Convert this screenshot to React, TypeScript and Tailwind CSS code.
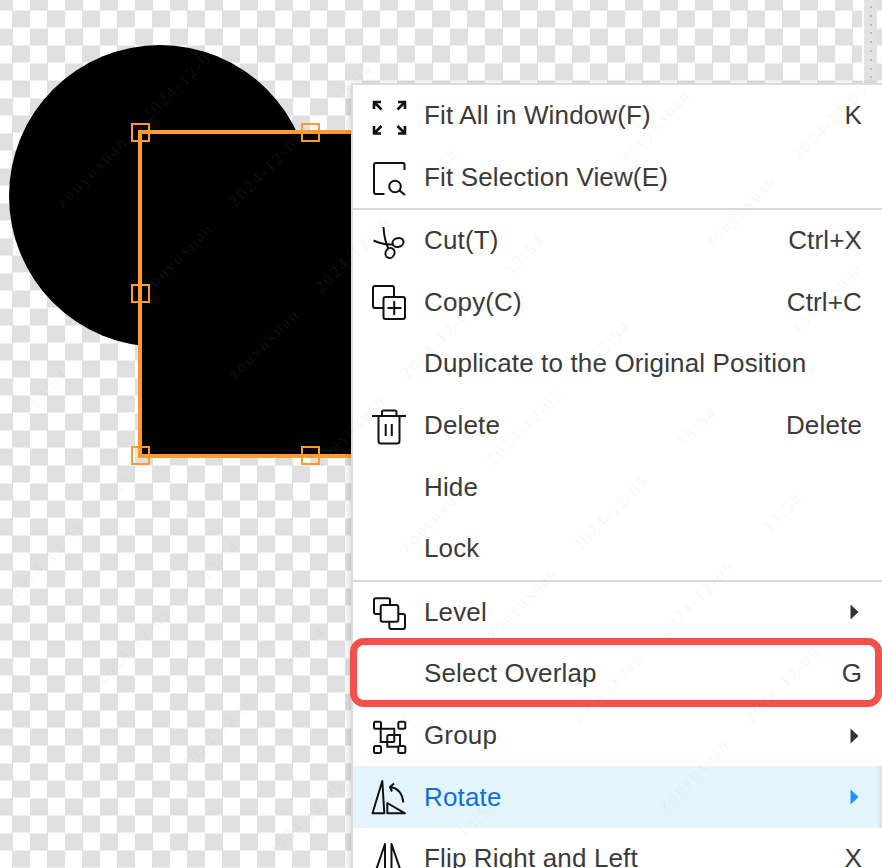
import React from 'react';

const Icon = ({ children }: { children: React.ReactNode }) => (
  <svg width="36" height="36" viewBox="0 0 36 36" fill="none" stroke="#111" strokeWidth="2" className="shrink-0 overflow-visible">
    {children}
  </svg>
);

const icons: Record<string, React.ReactNode> = {
  fit: (
    <>
      <path d="M3.5 4.5 L10.5 11.5 M3 11 V4 H10" strokeWidth="2.6" />
      <path d="M33.5 4.5 L26.5 11.5 M27 4 H34 V11" strokeWidth="2.6" />
      <path d="M3.5 35 L10.5 28 M3 28 V35.5 H10" strokeWidth="2.6" />
      <path d="M33.5 35 L26.5 28 M27 35.5 H34 V28" strokeWidth="2.6" />
    </>
  ),
  selection: (
    <>
      <path d="M33.5 11 V5.5 Q33.5 4 32 4 H5 Q3 4 3 6 V33 Q3 35 5 35 H13.5" />
      <circle cx="24" cy="27.5" r="5.8" />
      <path d="M28.5 31.5 L34 36" strokeWidth="2.2" />
    </>
  ),
  cut: (
    <>
      <path d="M2.5 17.5 Q12 22 22.5 21.5" />
      <path d="M12.5 4 Q13 16 17.5 26" />
      <ellipse cx="27" cy="19.5" rx="5.6" ry="4.4" transform="rotate(-15 27 19.5)" />
      <ellipse cx="19" cy="30" rx="4.4" ry="5.2" transform="rotate(25 19 30)" />
    </>
  ),
  copy: (
    <>
      <path d="M12 24 H4 Q2 24 2 22 V4 Q2 2 4 2 H21 Q23 2 23 4 V12.5" />
      <rect x="12.5" y="13" width="21.5" height="22" rx="2" />
      <path d="M23.2 17 V31 M16.5 24 H30.5" />
    </>
  ),
  trash: (
    <>
      <path d="M1 8 H35" />
      <path d="M11 8 V4 Q11 2.5 12.5 2.5 H24 Q25.5 2.5 25.5 4 V8" />
      <path d="M7.5 8 V33 Q7.5 35.5 10 35.5 H26 Q28.5 35.5 28.5 33 V8" />
      <path d="M14.7 16 V28 M20.8 16 V28" />
    </>
  ),
  level: (
    <>
      <path d="M9.7 20 H5 Q3 20 3 18 V6 Q3 4.3 5 4.3 H17 Q19 4.3 19 6 V11" />
      <rect x="9.7" y="11" width="17.6" height="16.7" rx="2" />
      <path d="M27.3 20 H32 Q34 20 34 22 V33 Q34 35 32 35 H20.3 Q18.3 35 18.3 33 V27.7" />
    </>
  ),
  group: (
    <>
      <rect x="3" y="3.7" width="7" height="7" rx="1.5" />
      <rect x="27.3" y="3.7" width="7" height="7" rx="1.5" />
      <rect x="3" y="28" width="7" height="7" rx="1.5" />
      <rect x="27.3" y="28" width="7" height="7" rx="1.5" />
      <path d="M10 10.7 H23.3 V17 M16.3 24 H9.7 V10.7" />
      <rect x="16.3" y="17" width="7" height="7" rx="1.5" />
      <path d="M23.3 17 H29 V28 M16.3 24 V28.7 H27.3" />
    </>
  ),
  rotate: (
    <>
      <path d="M11.3 2 L1.5 34.3 H13.3 Z" strokeLinejoin="round" />
      <path d="M16.3 24 V34.3 H34 Z" strokeLinejoin="round" />
      <path d="M19.5 8 Q31 10 32.3 23.5" />
      <path d="M23 4.5 L19 8 L21 12.5" />
    </>
  ),
  flip: (
    <>
      <path d="M14 3 L2 38 H14 Z" strokeLinejoin="round" />
      <path d="M20.5 3 L32.5 38 H20.5 Z" strokeLinejoin="round" />
    </>
  ),
};

type Item = { label: string; icon?: string; key?: string; arrow?: boolean; active?: boolean; divider?: boolean };

const items: Item[] = [
  { label: 'Fit All in Window(F)', icon: 'fit', key: 'K' },
  { label: 'Fit Selection View(E)', icon: 'selection', divider: true },
  { label: 'Cut(T)', icon: 'cut', key: 'Ctrl+X' },
  { label: 'Copy(C)', icon: 'copy', key: 'Ctrl+C' },
  { label: 'Duplicate to the Original Position' },
  { label: 'Delete', icon: 'trash', key: 'Delete' },
  { label: 'Hide' },
  { label: 'Lock', divider: true },
  { label: 'Level', icon: 'level', arrow: true },
  { label: 'Select Overlap', key: 'G' },
  { label: 'Group', icon: 'group', arrow: true },
  { label: 'Rotate', icon: 'rotate', arrow: true, active: true },
  { label: 'Flip Right and Left', icon: 'flip', key: 'X' },
];

const MenuRow = ({ item }: { item: Item }) => (
  <>
    <div className={`relative flex h-[61.6px] shrink-0 items-center pl-[18px] pr-[20px] ${item.active ? 'bg-[#e3f4fd] text-[#0f6fdc]' : 'text-[#3a3a3a]'}`}>
      <div className="h-9 w-9 shrink-0">{item.icon && <Icon>{icons[item.icon]}</Icon>}</div>
      <span className="ml-[17px] whitespace-nowrap">{item.label}</span>
      {item.key && <span className="ml-auto whitespace-nowrap">{item.key}</span>}
      {item.arrow && (
        <svg width="9" height="16" viewBox="0 0 9 16" className="ml-auto mr-[3px]">
          <path d="M0.5 0.5 L8.5 8 L0.5 15.5 Z" fill={item.active ? '#1e90ff' : '#333'} />
        </svg>
      )}
      {item.active && <div className="absolute inset-y-0 right-0 w-1.5 bg-gradient-to-r from-transparent to-[#d5e2ea]" />}
    </div>
    {item.divider && <div className="h-[2px] shrink-0 bg-[#d9d9d9]" />}
  </>
);

// watermark runs along diagonals: the three words repeat across, the same word repeats down
const words = [
  { text: 'zouyuxuan', s: -80 },
  { text: '2024-12-05', s: 98 },
  { text: '13:54', s: 270 },
];
const marks: { text: string; x: number; y: number }[] = [];
for (let p = -2; p <= 2; p++) {
  for (const w of words) {
    for (let k = -1; k <= 8; k++) {
      const s = w.s + p * 610;
      const t = 264 + 172 * k;
      const x = (s + t) / 2;
      const y = (t - s) / 2;
      if (x > 45 && x < 835 && y > 45 && y < 820) marks.push({ text: w.text, x, y });
    }
  }
}

const handles = ['left-[131px] top-[123px]', 'left-[301px] top-[123px]', 'left-[131px] top-[284px]', 'left-[131px] top-[446px]', 'left-[301px] top-[446px]'];

export default function App() {
  return (
    <div className="relative h-[868px] w-[882px] overflow-hidden bg-white bg-[conic-gradient(#e0e0e0_25%,#fff_0_50%,#e0e0e0_0_75%,#fff_0)] bg-[length:35px_35px] bg-[position:-5px_10.5px] font-['Liberation_Sans',Arial,sans-serif] text-[26px] tracking-[0.15px]">
      {/* canvas shapes */}
      <div className="absolute left-[9px] top-[45px] h-[302px] w-[302px] rounded-full bg-black" />
      <div className="absolute left-[138px] top-[130px] h-[328px] w-[344px] border-4 border-[#ff9a2e] bg-black" />
      {handles.map((h) => (
        <div key={h} className={`absolute h-[19px] w-[19px] border-2 border-[#ff9a2e] ${h}`} />
      ))}

      {/* top right scroll strip */}
      <div className="absolute right-[5px] top-0 flex h-[83px] w-[15px] flex-col items-center gap-[6.8px] border-l-2 border-white bg-[#e2e2e2] pt-[6px]">
        {Array.from({ length: 9 }).map((_, i) => (
          <div key={i} className="h-[2px] w-[2px] shrink-0 rounded-full bg-[#aaa]" />
        ))}
      </div>

      {/* context menu */}
      <div className="absolute bottom-[-30px] left-[351px] right-0 top-[82.8px] flex flex-col overflow-hidden border-l-2 border-t-2 border-[#dcdcdc] bg-white shadow-[-3px_0_5px_rgba(0,0,0,0.12)]">
        {items.map((item) => (
          <MenuRow key={item.label} item={item} />
        ))}
      </div>

      {/* red callout */}
      <div className="absolute left-[350px] top-[638px] h-[69px] w-[532px] rounded-[14px] border-[7px] border-[#f44f4a]" />

      {/* watermark */}
      <div className="pointer-events-none absolute inset-0 font-['Liberation_Serif',serif] text-[17px] tracking-[2px] text-[rgba(170,170,170,0.11)]">
        {marks.map((m, i) => (
          <span
            key={i}
            className="absolute -translate-x-1/2 -translate-y-1/2 -rotate-45 whitespace-nowrap"
            style={{ left: m.x, top: m.y }}
          >
            {m.text}
          </span>
        ))}
      </div>
    </div>
  );
}
